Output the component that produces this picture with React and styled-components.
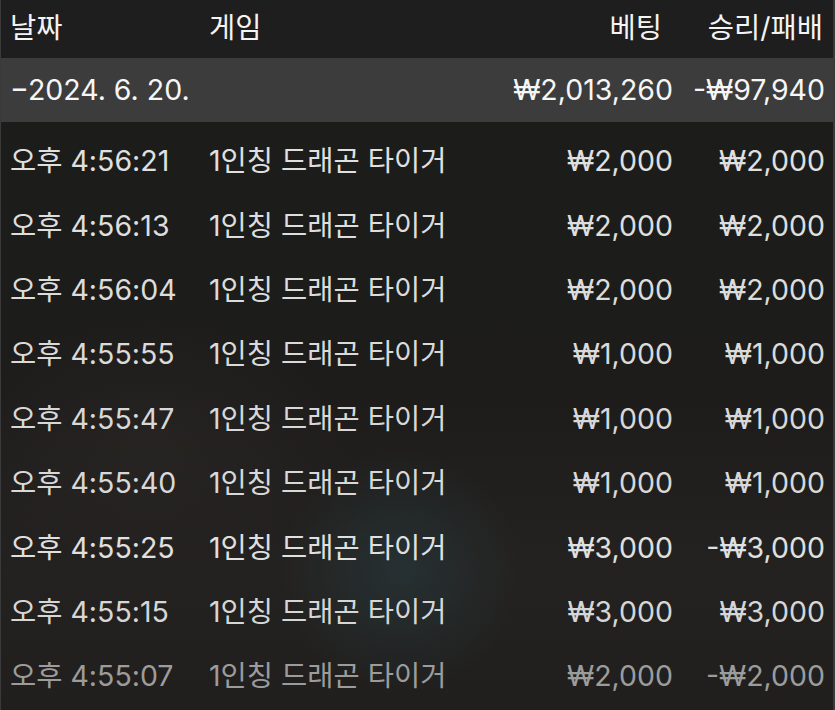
import React from "react";
import styled, { createGlobalStyle } from "styled-components";

const Global = createGlobalStyle`
  html, body { margin: 0; padding: 0; background: #1c1c1c; }
  body { font-family: "Inter", "Noto Sans CJK KR", sans-serif; }
`;

const Panel = styled.div`
  width: 835px;
  height: 710px;
  box-sizing: border-box;
  overflow: hidden;
  border-left: 1px solid #3a3a3a;
  border-right: 2px solid #3a3a3a;
  background:
    radial-gradient(circle at 400px 570px, rgba(40, 60, 66, 0.55) 0, rgba(40, 60, 66, 0) 120px),
    radial-gradient(ellipse at 150px 440px, rgba(60, 55, 50, 0.25) 0, rgba(60, 55, 50, 0) 200px),
    linear-gradient(180deg, #1c1c1c 0%, #1d1c1b 55%, #242220 80%, #201f1e 100%);
  color: #dcdcdc;
`;

const Row = styled.div`
  display: grid;
  grid-template-columns: 199px 1fr 192px 152px;
  align-items: center;
  box-sizing: border-box;
  height: ${(p) => p.$h || 64.4}px;
  padding: ${(p) => p.$pt || 0}px 8px ${(p) => p.$pb || 0}px 9px;
  background: ${(p) => p.$bg || "transparent"};
  color: ${(p) => p.$color || "#dcdcdc"};
  font-size: 28.5px;
  line-height: 32px;
`;

const Cell = styled.div`
  white-space: nowrap;
  text-align: ${(p) => (p.$right ? "right" : "left")};
  padding-right: ${(p) => p.$pr || 0}px;
`;

const rows = [
  ["오후 4:56:21", "₩2,000", "₩2,000"],
  ["오후 4:56:13", "₩2,000", "₩2,000"],
  ["오후 4:56:04", "₩2,000", "₩2,000"],
  ["오후 4:55:55", "₩1,000", "₩1,000"],
  ["오후 4:55:47", "₩1,000", "₩1,000"],
  ["오후 4:55:40", "₩1,000", "₩1,000"],
  ["오후 4:55:25", "₩3,000", "-₩3,000"],
  ["오후 4:55:15", "₩3,000", "₩3,000"],
  ["오후 4:55:07", "₩2,000", "-₩2,000"],
];

const colors = [
  "#e0e0e0", "#dedede", "#dcdcdc", "#dadada", "#d8d8d8",
  "#d8d8d8", "#e0e0e0", "#d6d6d6", "#9c9c9c",
];

export default function App() {
  return (
    <>
      <Global />
      <Panel>
        <Row $h={58} $pb={2} $bg="#1e1e1e" $color="#f4f4f4">
          <Cell>날짜</Cell>
          <Cell>게임</Cell>
          <Cell $right $pr={11}>베팅</Cell>
          <Cell $right $pr={2}>승리/패배</Cell>
        </Row>
        <Row $h={64} $bg="#3c3c3c" $color="#f6f6f6">
          <Cell>−2024. 6. 20.</Cell>
          <Cell />
          <Cell $right>₩2,013,260</Cell>
          <Cell $right>-₩97,940</Cell>
        </Row>
        {rows.map((r, i) => (
          <Row key={i} $pt={14} $color={colors[i]}>
            <Cell>{r[0]}</Cell>
            <Cell>1인칭 드래곤 타이거</Cell>
            <Cell $right>{r[1]}</Cell>
            <Cell $right>{r[2]}</Cell>
          </Row>
        ))}
      </Panel>
    </>
  );
}
